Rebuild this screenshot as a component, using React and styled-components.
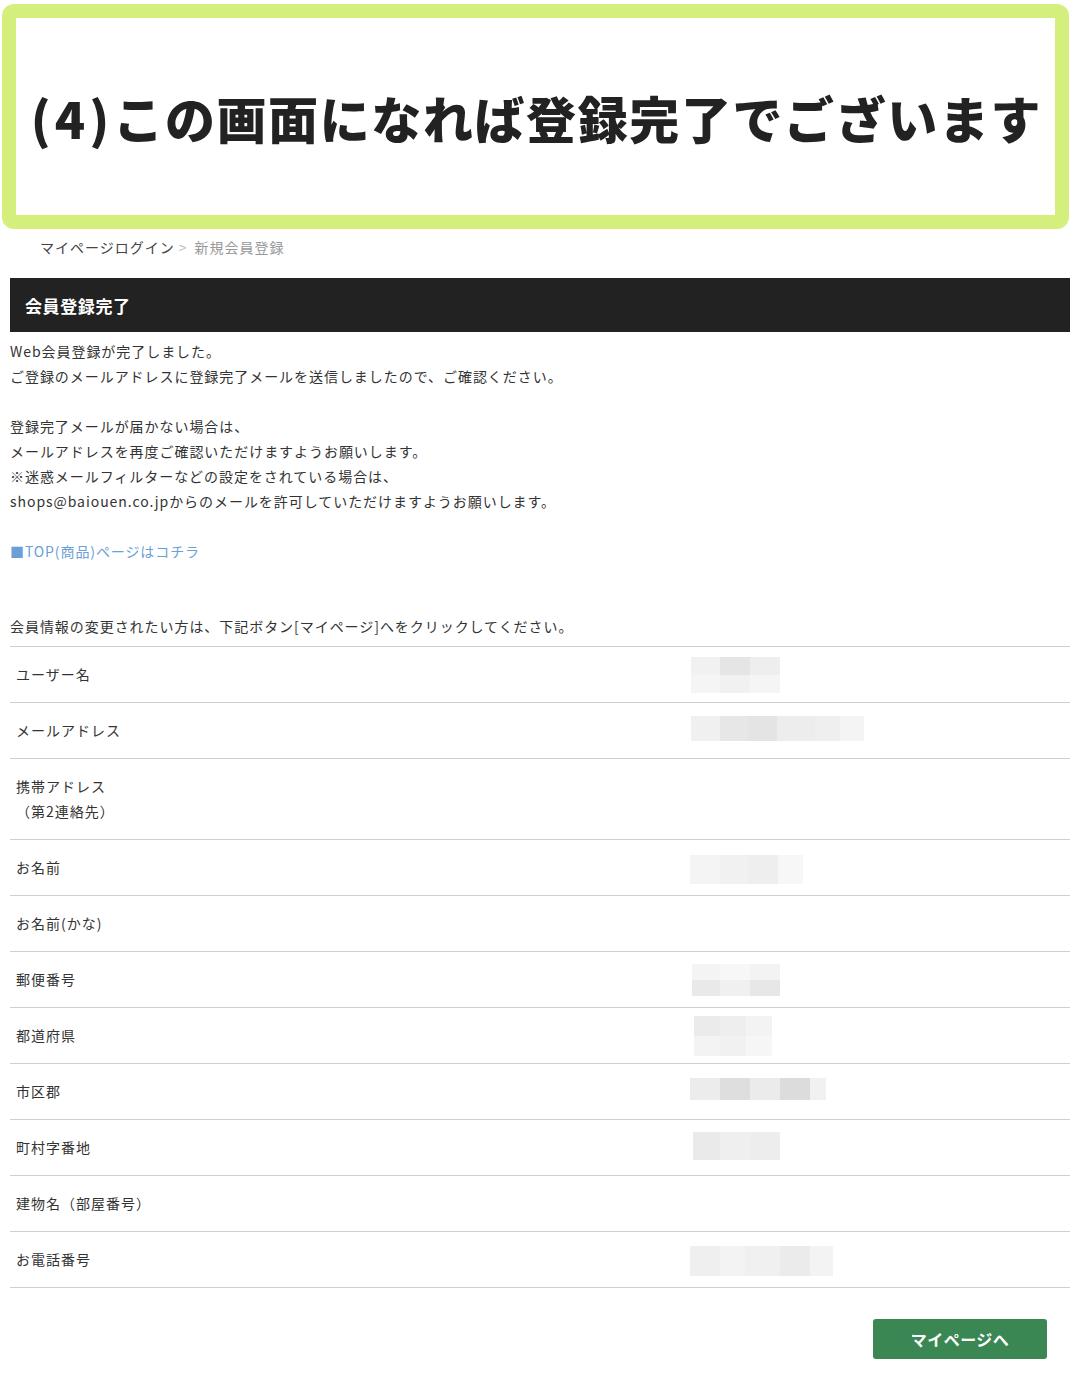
import React from "react";
import styled, { createGlobalStyle } from "styled-components";

const Global = createGlobalStyle`
  html, body { margin: 0; padding: 0; background: #fff; }
  body {
    font-family: "Noto Sans CJK JP", "Noto Sans", sans-serif;
    color: #333;
  }
`;

const Page = styled.div`
  width: 1070px;
  padding-bottom: 30px;
`;

const Frame = styled.div`
  box-sizing: border-box;
  height: 225px;
  margin: 4px 1px 0 2px;
  border: 14px solid #d4ef7c;
  border-radius: 12px;
  display: flex;
  align-items: center;
  justify-content: center;
`;

const BigTitle = styled.h1`
  margin: 0;
  font-family: "Noto Sans CJK JP", sans-serif;
  font-weight: 900;
  font-size: 50px;
  letter-spacing: 1.6px;
  color: #222;
  line-height: 1;
  padding-left: 2px;
`;

const Paren = styled.span`
  letter-spacing: 4px;
`;

const Content = styled.div`
  padding-left: 10px;
`;

const Breadcrumb = styled.div`
  margin: 8px 0 0 30px;
  font-size: 14px;
  line-height: 20px;
  letter-spacing: 1px;
  color: #999;
`;

const Crumb = styled.span`
  color: #444;
`;

const Sep = styled.span`
  color: #bbb;
  margin: 0 7px 0 4px;
`;

const Bar = styled.div`
  margin-top: 21px;
  height: 54px;
  background: #222;
  display: flex;
  align-items: center;
  padding-left: 15px;
  color: #fff;
  font-size: 17px;
  font-weight: 700;
  letter-spacing: 0.6px;
`;

const Text = styled.div`
  margin-top: 7px;
  font-size: 14px;
  line-height: 25px;
  letter-spacing: 0.95px;
  color: #333;
`;

const Link = styled.a`
  color: #6aa0d6;
  text-decoration: none;
  letter-spacing: 0.9px;
`;

const Note = styled.div`
  margin-top: 50px;
  font-size: 14px;
  line-height: 25px;
  letter-spacing: 0.95px;
  color: #333;
`;

const Table = styled.div`
  margin-top: 7px;
  border-top: 1px solid #cfcfcf;
`;

const Row = styled.div`
  display: grid;
  grid-template-columns: 680px 1fr;
  align-items: center;
  border-bottom: 1px solid #cfcfcf;
  box-sizing: border-box;
  padding: 15px 0;
`;

const Label = styled.div`
  padding-left: 6px;
  font-size: 14px;
  line-height: 25px;
  letter-spacing: 1px;
  color: #333;
  white-space: pre-line;
`;

const Value = styled.div`
  height: 25px;
  display: flex;
  align-items: center;
`;

const Mosaic = styled.div`
  display: grid;
  grid-template-columns: ${(p) => p.cols};
  grid-auto-rows: ${(p) => p.rowH}px;
  margin-left: ${(p) => p.offset || 0}px;
  margin-top: ${(p) => p.shift || 0}px;
  width: max-content;
  flex-shrink: 0;
  filter: blur(0.6px);
`;

const Cell = styled.div`
  background: ${(p) => p.c};
`;

const Actions = styled.div`
  display: flex;
  justify-content: flex-end;
  padding-right: 23px;
  margin-top: 31px;
`;

const Button = styled.button`
  width: 174px;
  height: 40px;
  border: none;
  border-radius: 3px;
  background: #3a8753;
  color: #fff;
  font-family: "Noto Sans CJK JP", sans-serif;
  font-size: 16px;
  font-weight: 700;
  letter-spacing: 0.5px;
  cursor: pointer;
`;

const mosaics = {
  user: { offset: 1, shift: 0, cols: "29px 30px 30px", rowH: 18, cells: [["#f1f1f1", "#e5e5e5", "#eeeeee"], ["#f5f5f5", "#f1f1f1", "#f5f5f5"]] },
  mail: { offset: 1, shift: -4, cols: "29px 28px 29px 38px 25px 24px", rowH: 25, cells: [["#f0f0f0", "#e7e7e7", "#e4e4e4", "#ededed", "#efefef", "#f4f4f4"]] },
  name: { offset: 0, shift: 4, cols: "30px 28px 30px 25px", rowH: 29, cells: [["#f4f4f4", "#f1f1f1", "#eeeeee", "#f7f7f7"]] },
  zip: { offset: 2, shift: 0, cols: "28px 30px 30px", rowH: 16, cells: [["#f4f4f4", "#f7f7f7", "#f3f3f3"], ["#e9e9e9", "#f0f0f0", "#e7e7e7"]] },
  pref: { offset: 4, shift: 0, cols: "26px 26px 26px", rowH: 20, cells: [["#ebebeb", "#eeeeee", "#f3f3f3"], ["#f3f3f3", "#f1f1f1", "#f6f6f6"]] },
  city: { offset: 0, shift: -6, cols: "30px 30px 30px 30px 16px", rowH: 22, cells: [["#ececec", "#dedede", "#ebebeb", "#dcdcdc", "#f1f1f1"]] },
  town: { offset: 3, shift: -4, cols: "27px 30px 30px", rowH: 28, cells: [["#eaeaea", "#efefef", "#ededed"]] },
  tel: { offset: 0, shift: 3, cols: "30px 25px 35px 30px 23px", rowH: 30, cells: [["#efefef", "#f3f3f3", "#f0f0f0", "#ebebeb", "#f3f3f3"]] },
};

const rows = [
  { label: "ユーザー名", m: "user" },
  { label: "メールアドレス", m: "mail" },
  { label: "携帯アドレス\n（第2連絡先）" },
  { label: "お名前", m: "name" },
  { label: "お名前(かな)" },
  { label: "郵便番号", m: "zip" },
  { label: "都道府県", m: "pref" },
  { label: "市区郡", m: "city" },
  { label: "町村字番地", m: "town" },
  { label: "建物名（部屋番号）" },
  { label: "お電話番号", m: "tel" },
];

function Blur({ data }) {
  return (
    <Mosaic cols={data.cols} rowH={data.rowH} offset={data.offset} shift={data.shift}>
      {data.cells.flatMap((r, i) => r.map((c, j) => <Cell key={i + "-" + j} c={c} />))}
    </Mosaic>
  );
}

export default function App() {
  return (
    <Page>
      <Global />
      <Frame>
        <BigTitle>
          <Paren>(4)</Paren>この画面になれば登録完了でございます
        </BigTitle>
      </Frame>
      <Content>
        <Breadcrumb>
          <Crumb>マイページログイン</Crumb>
          <Sep>&gt;</Sep>
          新規会員登録
        </Breadcrumb>
        <Bar>会員登録完了</Bar>
        <Text>
          Web会員登録が完了しました。
          <br />
          ご登録のメールアドレスに登録完了メールを送信しましたので、ご確認ください。
          <br />
          <br />
          登録完了メールが届かない場合は、
          <br />
          メールアドレスを再度ご確認いただけますようお願いします。
          <br />
          ※迷惑メールフィルターなどの設定をされている場合は、
          <br />
          shops@baiouen.co.jpからのメールを許可していただけますようお願いします。
          <br />
          <br />
          <Link href="#">■TOP(商品)ページはコチラ</Link>
        </Text>
        <Note>会員情報の変更されたい方は、下記ボタン[マイページ]へをクリックしてください。</Note>
        <Table>
          {rows.map((r) => (
            <Row key={r.label}>
              <Label>{r.label}</Label>
              <Value>{r.m ? <Blur data={mosaics[r.m]} /> : null}</Value>
            </Row>
          ))}
        </Table>
        <Actions>
          <Button>マイページへ</Button>
        </Actions>
      </Content>
    </Page>
  );
}
